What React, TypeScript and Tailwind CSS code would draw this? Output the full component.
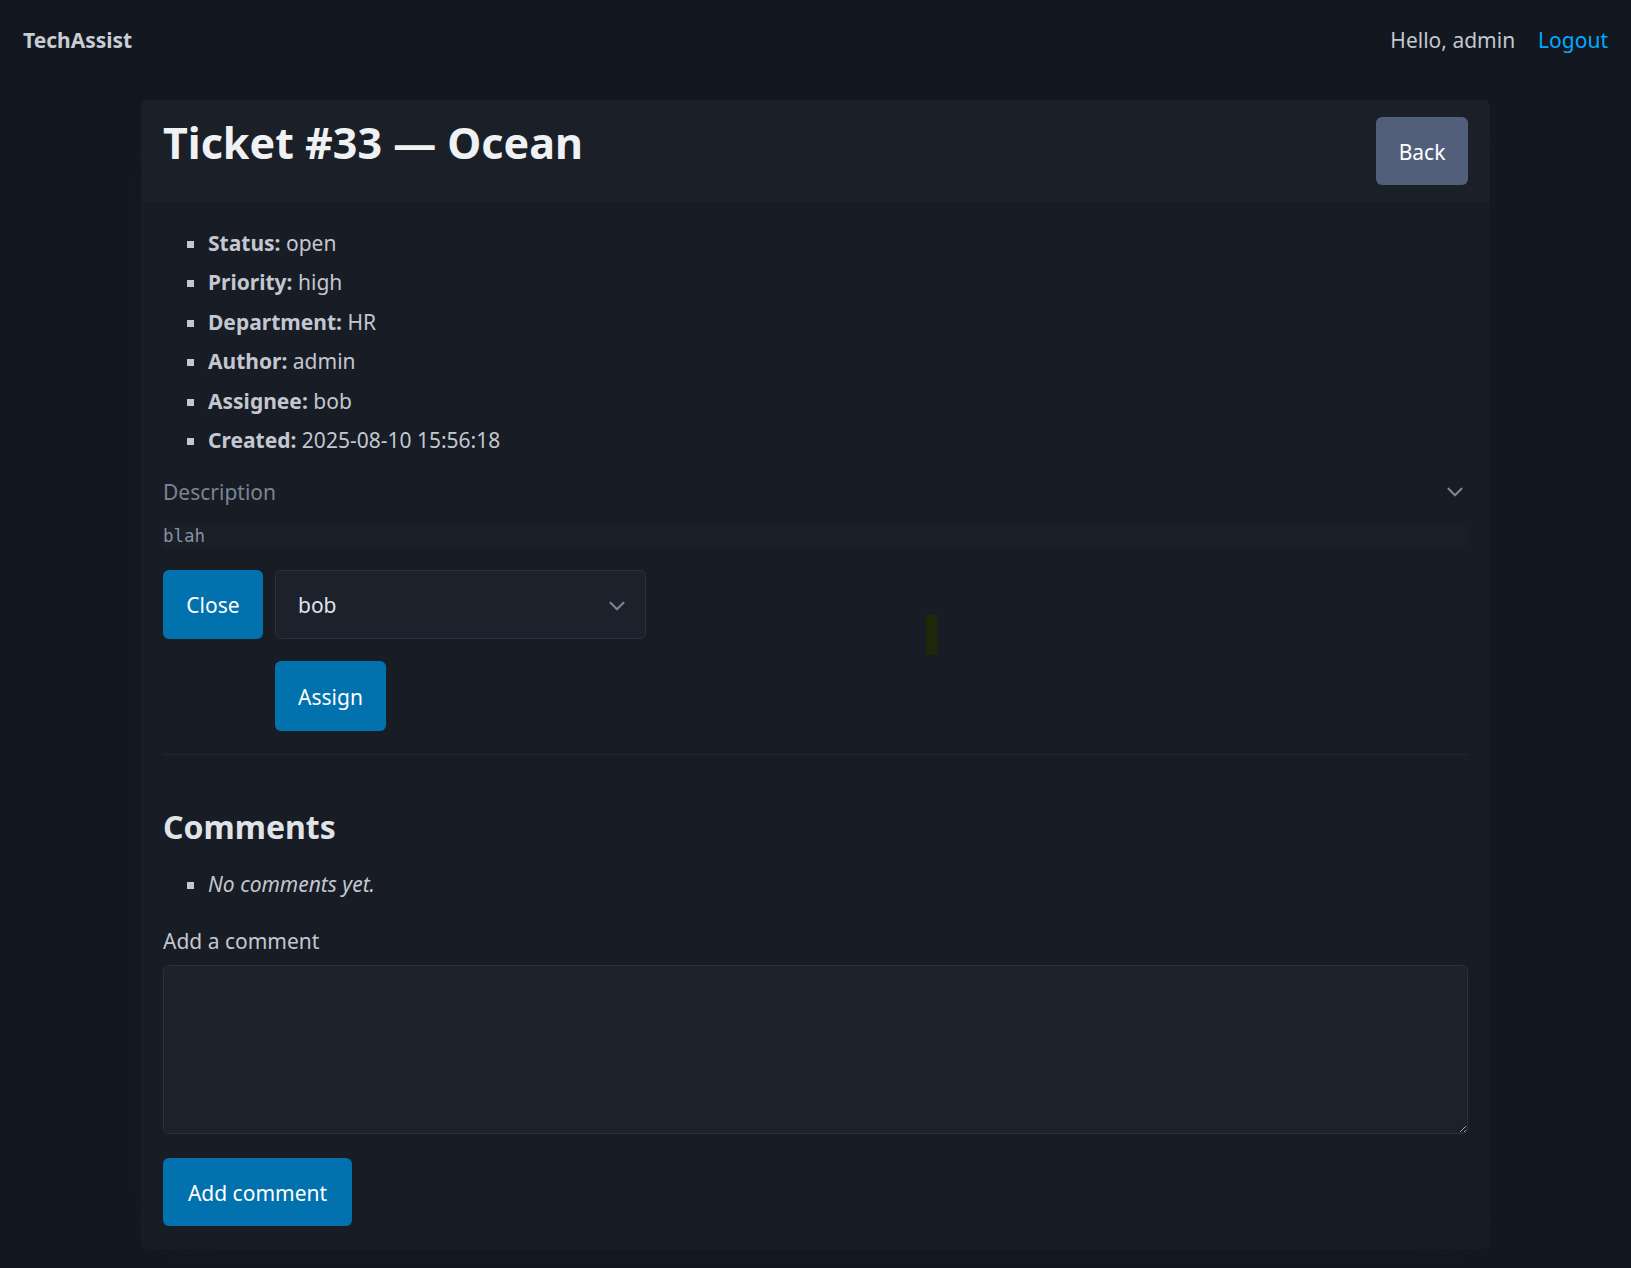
import { ChevronDown } from 'lucide-react';

const details = [
  { label: 'Status:', value: 'open' },
  { label: 'Priority:', value: 'high' },
  { label: 'Department:', value: 'HR' },
  { label: 'Author:', value: 'admin' },
  { label: 'Assignee:', value: 'bob' },
  { label: 'Created:', value: '2025-08-10 15:56:18' },
];

const App = () => {
  return (
    <div className="min-h-screen bg-[#13171f] text-[21px] text-[#c2c7d0] font-[family-name:'Noto_Sans',sans-serif]">
      {/* Nav */}
      <nav className="flex h-[78px] items-center justify-between px-[23px] pt-[4px]">
        <strong className="font-bold text-[#c8cdd5]">TechAssist</strong>
        <div className="flex items-center gap-[23px]">
          <span>Hello, admin</span>
          <a href="#" className="text-[#01aaff]">
            Logout
          </a>
        </div>
      </nav>

      <main className="pt-[22px] pb-[20px]">
        <article className="relative mx-auto w-[1349px] rounded-[6px] bg-[#181c25] shadow-[0_8px_60px_rgba(30,34,44,0.35)]">
          {/* Header */}
          <header className="flex items-start justify-between rounded-t-[6px] bg-[#1a1f28] px-[22px] py-[17px]">
            <h1 className="mt-[1px] text-[43px] leading-[50px] font-bold text-[#f0f1f3]">
              Ticket #33 — Ocean
            </h1>
            <button className="h-[68px] w-[92px] rounded-[6px] bg-[#525f7a] pt-[3px] text-white">Back</button>
          </header>

          {/* Body */}
          <div className="px-[22px] pt-[22px] pb-[23px]">
            <ul className="list-[square] pl-[45px]">
              {details.map((d) => (
                <li key={d.label} className="leading-[39.4px]">
                  <strong className="font-bold">{d.label}</strong> {d.value}
                </li>
              ))}
            </ul>

            <div className="mt-[16px] flex h-[32px] items-center justify-between text-[#7b8495]">
              <span>Description</span>
              <ChevronDown className="h-[26px] w-[26px]" strokeWidth={2} />
            </div>

            <pre className="mt-[17px] h-[23px] rounded-[4px] bg-[#1a1f28] text-[17.5px] leading-[23px] text-[#8891a4] font-[family-name:'DejaVu_Sans_Mono',monospace]">
              blah
            </pre>

            <div className="mt-[22px] flex items-start gap-[12px]">
              <button className="h-[69px] w-[100px] rounded-[6px] bg-[#0172ad] pt-[2px] text-white">Close</button>
              <div className="flex flex-col items-start gap-[22px]">
                <div className="flex h-[69px] w-[371px] items-center justify-between rounded-[6px] border border-[#2a3140] bg-[#1c212c] pt-[2px] pr-[15px] pl-[22px] text-[#dfe3eb]">
                  <span>bob</span>
                  <ChevronDown className="h-[26px] w-[26px] text-[#7b8495]" strokeWidth={2} />
                </div>
                <button className="h-[70px] w-[111px] rounded-[6px] bg-[#0172ad] pt-[2px] text-white">Assign</button>
              </div>
            </div>

            <hr className="mt-[23px] border-t border-[#222733]" />

            <h2 className="mt-[51px] text-[32px] leading-[42px] font-bold text-[#e0e3e7]">Comments</h2>
            <ul className="mt-[17px] list-[square] pl-[45px]">
              <li className="leading-[39.4px] italic">No comments yet.</li>
            </ul>

            <label className="mt-[21px] block leading-[31.5px]">Add a comment</label>
            <textarea className="mt-[8px] block h-[169px] w-full rounded-[6px] border border-[#2a3140] bg-[#1c212c] p-[15px] text-[#dfe3eb] outline-none" />

            <button className="mt-[24px] h-[68px] w-[189px] rounded-[6px] bg-[#0172ad] pt-[2px] text-white">
              Add comment
            </button>
          </div>

          {/* caret artifact */}
          <div className="absolute top-[515px] left-[785px] h-[40px] w-[11px] bg-[#1f2709]" />
        </article>
      </main>
    </div>
  );
};

export default App;
